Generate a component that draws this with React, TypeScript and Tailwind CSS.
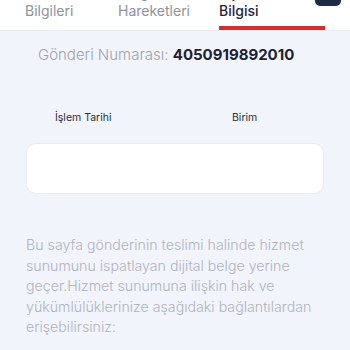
export default function App() {
  return (
    <div className="w-[350px] h-[350px] overflow-hidden bg-[#f1f4fb] font-['Inter','Noto_Sans',sans-serif]">
      <div className="relative h-[31px] overflow-hidden bg-white border-b border-[#e6e9f0] flex">
        <div className="w-[108px] pl-[25px] flex flex-col justify-end pb-[10px] text-[14px] leading-[18px] text-[#8e929c]">
          <span>Gönderi</span>
          <span>Bilgileri</span>
        </div>
        <div className="w-[111px] pl-[10px] flex flex-col justify-end pb-[10px] text-[14px] leading-[18px] text-[#8e929c]">
          <span>Kargo</span>
          <span>Hareketleri</span>
        </div>
        <div className="relative w-[106px] flex flex-col justify-end pb-[10px] text-[14px] leading-[18px] font-medium text-[#1d2639]">
          <span>Dijital</span>
          <span>Bilgisi</span>
          <div className="absolute left-0 right-0 bottom-0 h-[4px] bg-[#d32f2f]" />
        </div>
        <div className="absolute right-[9px] top-[-8px] w-[26px] h-[14px] rounded-[5px] bg-[#1e2b47]" />
      </div>

      <div className="pt-[14px] pl-[38px] text-[15px] leading-[20px]">
        <span className="font-light text-[#9fa2ab]">Gönderi Numarası: </span>
        <span className="font-bold text-[#1a2236]">4050919892010</span>
      </div>

      <div className="mt-[46px] flex text-[10.5px] leading-[14px] text-[#2a2f3a]">
        <span className="pl-[55px] w-[232px]">İşlem Tarihi</span>
        <span>Birim</span>
      </div>

      <div className="mx-[26px] mt-[18px] h-[51px] rounded-[10px] bg-white border border-[#e7eaf1]" />

      <p className="mt-[41px] px-[26px] text-[14.2px] leading-[20.5px] font-light text-[#b0b3bc]">
        Bu sayfa gönderinin teslimi halinde hizmet sunumunu ispatlayan dijital belge yerine geçer.Hizmet sunumuna ilişkin hak ve yükümlülüklerinize aşağıdaki bağlantılardan erişebilirsiniz:
      </p>
    </div>
  );
}
